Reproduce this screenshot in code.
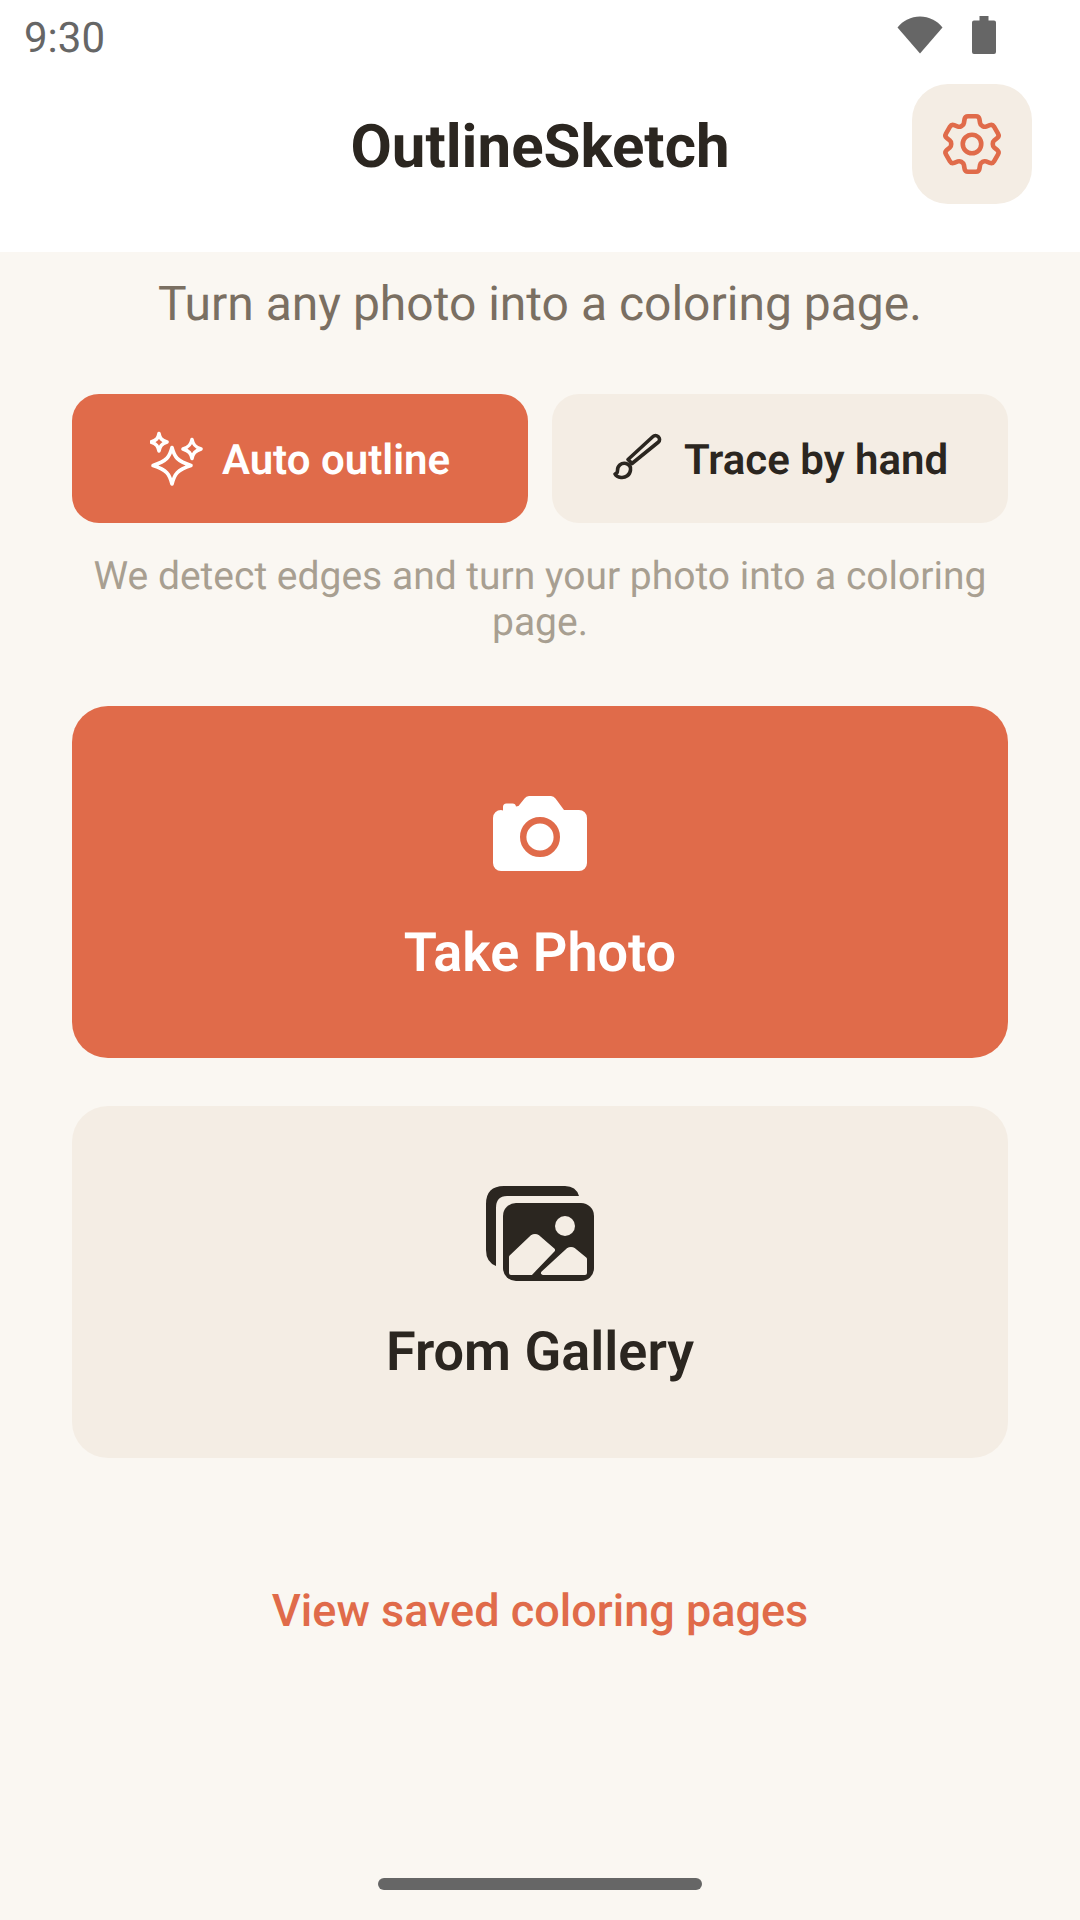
<div class="page">
  <header class="top">
    <div class="status">
      <span class="time">9:30</span>
      <div class="status-icons">
        <svg class="wifi" viewBox="0 0 46 38" aria-hidden="true"><path d="M23 37.500 0.500 11.500C6 4.500 14 .5 23 .5s17 4 22.500 11z"/></svg>
        <svg class="battery" viewBox="0 0 24 38" aria-hidden="true"><path d="M7.500 0h9v4.500h5.500a2 2 0 0 1 2 2V36a2 2 0 0 1-2 2H2a2 2 0 0 1-2-2V6.500a2 2 0 0 1 2-2h5.500z"/></svg>
      </div>
    </div>
    <div class="bar">
      <h1>OutlineSketch</h1>
      <button class="gear" aria-label="Settings">
        <svg viewBox="0 0 24 24" fill="none" stroke="currentColor" stroke-width="1.5" stroke-linecap="round" stroke-linejoin="round" aria-hidden="true">
          <path d="M9.594 3.94c.09-.542.56-.94 1.11-.94h2.593c.55 0 1.02.398 1.11.94l.213 1.281c.063.374.313.686.645.87.074.04.147.083.22.127.325.196.72.257 1.075.124l1.217-.456a1.125 1.125 0 0 1 1.37.49l1.296 2.247a1.125 1.125 0 0 1-.26 1.431l-1.003.827c-.293.241-.438.613-.43.992a7.723 7.723 0 0 1 0 .255c-.008.378.137.75.43.991l1.004.827c.424.35.534.955.26 1.43l-1.298 2.247a1.125 1.125 0 0 1-1.369.491l-1.217-.456c-.355-.133-.75-.072-1.076.124a6.47 6.47 0 0 1-.22.128c-.331.183-.581.495-.644.869l-.213 1.281c-.09.543-.56.94-1.11.94h-2.594c-.55 0-1.019-.398-1.11-.94l-.213-1.281c-.062-.374-.312-.686-.644-.87a6.52 6.52 0 0 1-.22-.127c-.325-.196-.72-.257-1.076-.124l-1.217.456a1.125 1.125 0 0 1-1.369-.49l-1.297-2.247a1.125 1.125 0 0 1 .26-1.431l1.004-.827c.292-.24.437-.613.43-.991a6.932 6.932 0 0 1 0-.255c.007-.38-.138-.751-.43-.992l-1.004-.827a1.125 1.125 0 0 1-.26-1.43l1.297-2.247a1.125 1.125 0 0 1 1.37-.491l1.216.456c.356.133.751.072 1.076-.124.072-.044.146-.086.22-.128.332-.183.582-.495.644-.869l.214-1.28Z"/>
          <path d="M15 12a3 3 0 1 1-6 0 3 3 0 0 1 6 0Z"/>
        </svg>
      </button>
    </div>
  </header>

  <main class="content">
    <p class="subtitle">Turn any photo into a coloring page.</p>

    <div class="modes">
      <button class="mode active">
        <svg viewBox="0 0 56 56" fill="none" stroke="currentColor" stroke-width="3.600" stroke-linejoin="round" aria-hidden="true">
          <path d="M22 16.500C24.500 26 27 30 41 34.500 27 39 24.500 43 22 53 19.500 43 17 39 3 34.500 17 30 19.500 26 22 16.500Z"/>
          <path d="M9 2.500C10 7.500 11.500 9.500 17 11 11.500 13 10 15 9 20 8 15 6.500 13 1 11 6.500 9.500 8 7.500 9 2.500Z"/>
          <path d="M42 8.500C43 13.500 45 16 51 18 45 20 43 22 42 27.500 41 22 39 20 33 18 39 16 41 13.500 42 8.500Z"/>
        </svg>
        <span>Auto outline</span>
      </button>
      <button class="mode">
        <svg viewBox="0 0 56 56" fill="none" stroke="currentColor" stroke-width="3.600" stroke-linejoin="round" aria-hidden="true">
          <path d="M20 32.500 16 28.500 41 5.500a3.500 3.500 0 0 1 5 0l.5.5a3.500 3.500 0 0 1 0 5Z"/>
          <path d="M14 32.500c3.500 1 5 3.500 4.500 6.500-.5 5-5 8-9.500 7.500-3-.3-5-1.500-6-3.500 2-.5 2.500-1.500 2.500-3.500 0-4.500 3.500-8 8.500-7Z"/>
        </svg>
        <span>Trace by hand</span>
      </button>
    </div>

    <p class="hint">We detect edges and turn your photo into a coloring page.</p>

    <div class="actions">
      <button class="action primary">
        <svg class="camera" viewBox="0 0 94 75" aria-hidden="true">
          <path fill="#fff" d="M10 14.500V11a3.500 3.500 0 0 1 3.500-3.500h6A3.500 3.500 0 0 1 23 10.500l2.500-.5 6-7.500A6 6 0 0 1 36 0h22a6 6 0 0 1 4.500 2.500L71 14h15a8 8 0 0 1 8 8v45a8 8 0 0 1-8 8H8a8 8 0 0 1-8-8V22a8 8 0 0 1 8-8Z"/>
          <circle cx="47" cy="41" r="16.800" fill="none" stroke="#E06B4A" stroke-width="6.400"/>
        </svg>
        <span>Take Photo</span>
      </button>
      <button class="action secondary">
        <svg class="gallery" viewBox="0 0 108 96" aria-hidden="true">
          <path fill="#2B2620" d="M93 10H21Q10 10 10 22V80Q0 76 0 64V18Q0 0 18 0H79Q90 0 93 10Z"/>
          <rect x="17" y="17" width="91" height="78" rx="13" fill="#2B2620"/>
          <circle cx="79" cy="40" r="10" fill="#F4EDE4"/>
          <path fill="#F4EDE4" stroke="#F4EDE4" stroke-width="4" stroke-linejoin="round" d="M25 71V87H45L67 64 52 51Q49 49 46 51Z"/>
          <path fill="#F4EDE4" stroke="#F4EDE4" stroke-width="4" stroke-linejoin="round" d="M57 87H99V73L88 64Q85 62 82 64Z"/>
        </svg>
        <span>From Gallery</span>
      </button>
    </div>

    <button class="saved">View saved coloring pages</button>
  </main>

  <div class="home"><span></span></div>
</div>

<style>
  :global(body) {
    margin: 0;
    background: #FAF7F2;
  }
  .page {
    width: 1080px;
    height: 1920px;
    display: flex;
    flex-direction: column;
    font-family: Roboto, sans-serif;
    text-rendering: geometricPrecision;
    background: #FAF7F2;
    color: #2B2620;
    overflow: hidden;
  }
  button {
    border: 0;
    font-family: inherit;
    text-rendering: inherit;
    padding: 0;
    cursor: pointer;
  }
  .top {
    background: #fff;
    height: 252px;
    flex: none;
  }
  .status {
    height: 84px;
    display: flex;
    align-items: flex-start;
    justify-content: space-between;
    padding: 0 84px 0 24px;
    color: #666;
  }
  .time {
    font-size: 42px;
    line-height: 48px;
    margin-top: 15px;
  }
  .status-icons {
    display: flex;
    gap: 29px;
    padding-top: 16px;
  }
  .status-icons svg {
    display: block;
    fill: #666;
    height: 38px;
  }
  .wifi { width: 46px; }
  .battery { width: 24px; }
  .bar {
    display: grid;
    grid-template-columns: 1fr auto 1fr;
    align-items: center;
    padding: 0 48px;
    height: 120px;
  }
  h1 {
    grid-column: 2;
    margin: 6px 0 0;
    font-size: 60px;
    line-height: 72px;
    font-weight: 700;
  }
  .gear {
    grid-column: 3;
    justify-self: end;
    width: 120px;
    height: 120px;
    border-radius: 36px;
    background: #F4EDE4;
    color: #E06B4A;
    display: flex;
    align-items: center;
    justify-content: center;
  }
  .gear svg {
    width: 74px;
    height: 74px;
  }
  .content {
    flex: 1;
    padding: 0 72px;
    display: flex;
    flex-direction: column;
    text-align: center;
  }
  .subtitle {
    margin: 23px 0 0;
    font-size: 48px;
    line-height: 58px;
    color: #7A6F62;
  }
  .modes {
    display: grid;
    grid-template-columns: 1fr 1fr;
    gap: 24px;
    margin-top: 61px;
  }
  .mode {
    height: 129px;
    border-radius: 27px;
    background: #F4EDE4;
    color: #2B2620;
    display: flex;
    align-items: center;
    justify-content: center;
    gap: 16px;
    font-size: 42px;
    line-height: 52px;
    font-weight: 600;
  }
  .mode span {
    padding-top: 4px;
  }
  .mode svg {
    width: 56px;
    height: 56px;
    flex: none;
  }
  .mode.active {
    background: #E06B4A;
    color: #fff;
  }
  .hint {
    margin: 30px 0 0;
    font-size: 39px;
    line-height: 46px;
    color: #A89F91;
  }
  .actions {
    display: flex;
    flex-direction: column;
    gap: 48px;
    margin-top: 61px;
  }
  .action {
    height: 352px;
    border-radius: 36px;
    display: flex;
    flex-direction: column;
    align-items: center;
    font-size: 54px;
    font-weight: 600;
    line-height: 62px;
  }
  .primary {
    background: #E06B4A;
    color: #fff;
    padding-top: 90px;
  }
  .camera {
    width: 94px;
    height: 75px;
    margin-bottom: 52px;
  }
  .secondary {
    background: #F4EDE4;
    color: #2B2620;
    padding-top: 80px;
  }
  .gallery {
    width: 108px;
    height: 96px;
    margin-bottom: 40px;
  }
  .saved {
    align-self: center;
    margin-top: 125px;
    background: none;
    color: #E06B4A;
    font-size: 45px;
    line-height: 56px;
    font-weight: 500;
  }
  .home {
    height: 42px;
    flex: none;
    display: flex;
    justify-content: center;
  }
  .home span {
    display: block;
    width: 324px;
    height: 12px;
    border-radius: 6px;
    background: #666;
  }
</style>
